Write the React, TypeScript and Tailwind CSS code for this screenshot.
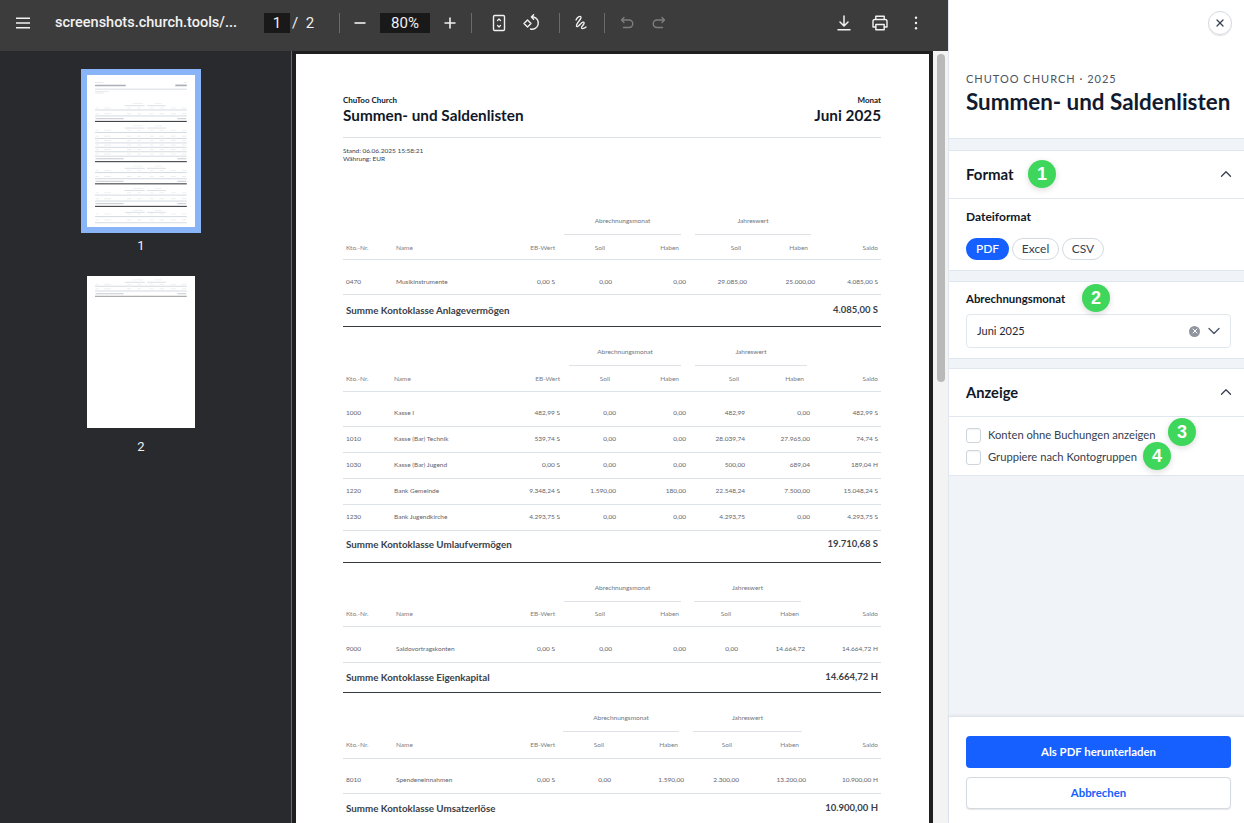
import type { ReactNode } from 'react';
import { ChevronDown, ChevronUp, X } from 'lucide-react';

interface Table {
    cols: string;
    spacing: string;
    headSize: string;
    firstRow: string;
    summarySize: string;
    groupGap: string;
    groupLeft: string;
    groupWidths: string[];
    headPads: string[];
    rows: string[][];
    summary: string;
    amount: string;
}

const tables: Table[] = [
    {
        cols: 'grid-cols-[50px_100px_59px_57px_74px_61px_68px_63px]',
        spacing: 'mt-[51px]',
        headSize: 'h-[25px] pt-[1px]',
        firstRow: 'h-[35px] pt-[10px]',
        summarySize: 'h-[32px] pb-[1px]',
        groupGap: 'gap-[14px]',
        groupLeft: 'ml-[221px]',
        groupWidths: ['w-[117px]', 'w-[116px]'],
        headPads: ['pr-[7px]', 'pr-[7px]', 'pr-[6px]', 'pr-[7px]'],
        rows: [['0470', 'Musikinstrumente', '0,00 S', '0,00', '0,00', '29.085,00', '25.000,00', '4.085,00 S']],
        summary: 'Summe Kontoklasse Anlagevermögen',
        amount: '4.085,00 S'
    },
    {
        cols: 'grid-cols-[48px_100px_66px_56px_70px_59px_65px_68px]',
        spacing: 'mt-[18px]',
        headSize: 'h-[26px]',
        firstRow: 'h-[35px] pt-[8px]',
        summarySize: 'h-[32px] pb-[4px]',
        groupGap: 'gap-[14px]',
        groupLeft: 'ml-[226px]',
        groupWidths: ['w-[112px]', 'w-[112px]'],
        headPads: ['pr-[6px]', 'pr-[7px]', 'pr-[6px]', 'pr-[6px]'],
        rows: [
            ['1000', 'Kasse I', '482,99 S', '0,00', '0,00', '482,99', '0,00', '482,99 S'],
            ['1010', 'Kasse (Bar) Technik', '539,74 S', '0,00', '0,00', '28.039,74', '27.965,00', '74,74 S'],
            ['1030', 'Kasse (Bar) Jugend', '0,00 S', '0,00', '0,00', '500,00', '689,04', '189,04 H'],
            ['1220', 'Bank Gemeinde', '9.348,24 S', '1.590,00', '180,00', '22.548,24', '7.500,00', '15.048,24 S'],
            ['1230', 'Bank Jugendkirche', '4.293,75 S', '0,00', '0,00', '4.293,75', '0,00', '4.293,75 S']
        ],
        summary: 'Summe Kontoklasse Umlaufvermögen',
        amount: '19.710,68 S'
    },
    {
        cols: 'grid-cols-[50px_100px_59px_57px_74px_52px_67px_73px]',
        spacing: 'mt-[18px]',
        headSize: 'h-[25px]',
        firstRow: 'h-[36px] pt-[9px]',
        summarySize: 'h-[30px] pb-[1px]',
        groupGap: 'gap-[13px]',
        groupLeft: 'ml-[221px]',
        groupWidths: ['w-[117px]', 'w-[107px]'],
        headPads: ['pr-[7px]', 'pr-[7px]', 'pr-[7px]', 'pr-[6px]'],
        rows: [['9000', 'Saldovortragskonten', '0,00 S', '0,00', '0,00', '0,00', '14.664,72', '14.664,72 H']],
        summary: 'Summe Kontoklasse Eigenkapital',
        amount: '14.664,72 H'
    },
    {
        cols: 'grid-cols-[50px_100px_59px_56px_73px_55px_67px_72px]',
        spacing: 'mt-[18px]',
        headSize: 'h-[27px]',
        firstRow: 'h-[35px] pt-[8px]',
        summarySize: 'h-[30px] pb-[1px]',
        groupGap: 'gap-[14px]',
        groupLeft: 'ml-[220px]',
        groupWidths: ['w-[116px]', 'w-[109px]'],
        headPads: ['pr-[7px]', 'pr-[6px]', 'pr-[7px]', 'pr-[7px]'],
        rows: [['8010', 'Spendeneinnahmen', '0,00 S', '0,00', '1.590,00', '2.300,00', '13.200,00', '10.900,00 H']],
        summary: 'Summe Kontoklasse Umsatzerlöse',
        amount: '10.900,00 H'
    }
];

// y positions for the little page previews, in page pixels
const miniFirst = [
    { g: 167, r: 180, h: 194, b: 205, rows: [[228, 240]], s: 256, e: 272 },
    { g: 298, r: 311, h: 324, b: 337, rows: [[359, 372], [385, 398], [411, 424], [437, 450], [464, 476]], s: 491, e: 508 },
    { g: 534, r: 547, h: 560, b: 572, rows: [[595, 608]], s: 623, e: 638 },
    { g: 665, r: 677, h: 691, b: 704, rows: [[726, 739]], s: 754, e: 770 },
    { g: 795, r: 805, h: 815, b: 830, rows: [[850, 866]], s: 0, e: 0 }
];

const miniSecond = [
    { g: 23, r: 37, h: 49, b: 60, rows: [[76, 88]], s: 104, e: 119 }
];

const miniCols = [[50, 20], [100, 40], [235, 24], [296, 20], [368, 22], [425, 26], [492, 28], [556, 26]];

const MiniPage = ({ blocks, first, endColor }: { blocks: typeof miniFirst; first?: boolean; endColor: string }) => (
    <svg viewBox="0 0 633 891" className="block w-[108px] h-[152px] bg-white">
        {first && (
            <>
                <rect x="47" y="41" width="50" height="5" fill="#e1e3e7" />
                <rect x="47" y="57" width="180" height="9" fill="#aab0b8" />
                <rect x="565" y="41" width="20" height="5" fill="#e1e3e7" />
                <rect x="518" y="56" width="67" height="10" fill="#aab0b8" />
                <rect x="47" y="80" width="538" height="6" fill="#d9dde3" />
                <rect x="47" y="95" width="80" height="5" fill="#e4e6ea" />
                <rect x="47" y="103" width="50" height="5" fill="#e4e6ea" />
            </>
        )}
        {blocks.map((t) => (
            <g key={t.g}>
                <rect x="268" y={t.g - 3} width="60" height="5" fill="#eceef1" />
                <rect x="398" y={t.g - 3} width="40" height="5" fill="#eceef1" />
                <rect x="221" y={t.r - 3} width="117" height="6" fill="#dde1e6" />
                <rect x="352" y={t.r - 3} width="110" height="6" fill="#dde1e6" />
                {miniCols.map(([x, w]) => (
                    <rect key={x} x={x} y={t.h - 3} width={w} height="5" fill="#eceef1" />
                ))}
                <rect x="47" y={t.b - 3} width="538" height="6" fill="#d5dbe2" />
                {t.rows.map(([text, rule]) => (
                    <g key={text}>
                        {miniCols.map(([x, w]) => (
                            <rect key={x} x={x} y={text - 3} width={w} height="5" fill="#e8eaed" />
                        ))}
                        <rect x="47" y={rule - 3} width="538" height="6" fill="#d5dbe2" />
                    </g>
                ))}
                {t.e > 0 && (
                    <>
                        <rect x="50" y={t.s - 3} width="165" height="6" fill="#c6cad0" />
                        <rect x="530" y={t.s - 3} width="52" height="6" fill="#c6cad0" />
                        <rect x="47" y={t.e - 3} width="538" height="6" fill={endColor} />
                    </>
                )}
            </g>
        ))}
    </svg>
);

const ReportTable = ({ table }: { table: Table }) => {
    const heads = ['EB-Wert', 'Soll', 'Haben', 'Soll', 'Haben', 'Saldo'];
    const headPads = ['', ...table.headPads, ''];

    return (
        <div className={table.spacing}>
            <div className={`flex h-[21px] ${table.groupLeft} ${table.groupGap}`}>
                {['Abrechnungsmonat', 'Jahreswert'].map((label, i) => (
                    <div
                        key={label}
                        className={`${table.groupWidths[i]} border-b border-[#dfe3e8] text-center text-[6.5px] leading-[14px] text-[#70757d]`}
                    >
                        {label}
                    </div>
                ))}
            </div>
            <div className={`grid ${table.cols} ${table.headSize} items-center border-b border-[#dde2e8] px-[3px] text-[6.5px] text-[#7b8087]`}>
                <span>Kto.-Nr.</span>
                <span>Name</span>
                {heads.map((head, i) => (
                    <span key={i} className={`text-right ${headPads[i]}`}>{head}</span>
                ))}
            </div>
            {table.rows.map((row, i) => (
                <div
                    key={row[0]}
                    className={`grid ${table.cols} ${i === 0 ? table.firstRow : 'h-[26px] pb-[1px]'} items-center border-b border-[#dde2e8] px-[3px] text-[6.5px] text-[#5f646c]`}
                >
                    {row.map((value, j) => (
                        <span key={j} className={`whitespace-nowrap ${j > 1 ? 'text-right' : ''}`}>{value}</span>
                    ))}
                </div>
            ))}
            <div className={`flex ${table.summarySize} items-center justify-between border-b border-[#343a40] px-[3px] font-bold text-[#3b4149]`}>
                <span className="text-[9.8px]">{table.summary}</span>
                <span className="text-[9.5px]">{table.amount}</span>
            </div>
        </div>
    );
};

const Icon = ({ children, muted }: { children: ReactNode; muted?: boolean }) => (
    <svg
        viewBox="0 0 20 20"
        fill="none"
        stroke="currentColor"
        strokeWidth="1.4"
        strokeLinecap="round"
        strokeLinejoin="round"
        className={`w-5 h-5 shrink-0 ${muted ? 'text-[#7d7e80]' : 'text-[#f1f1f1]'}`}
    >
        {children}
    </svg>
);

const Separator = ({ className }: { className: string }) => (
    <div className={`w-px h-5 bg-[#6a6a6a] shrink-0 ${className}`} />
);

const Toolbar = () => (
    <div className="h-[51px] shrink-0 bg-[#3c3c3c] flex items-start pt-[13px] pl-[13px] pr-[22px] text-[15px] text-[#f1f1f1] [font-family:Roboto,sans-serif]">
        <Icon><path d="M3 5.3h14M3 10h14M3 14.7h14" strokeLinecap="butt" /></Icon>
        <div className="ml-[22px] w-[182px] text-[14.5px] font-medium leading-5 whitespace-nowrap">screenshots.church.tools/...</div>
        <div className="ml-[27px] w-[26px] h-5 bg-[#191919] text-center leading-5 shrink-0">1</div>
        <span className="w-[10px] text-center leading-5">/</span>
        <span className="w-[20px] text-center leading-5">2</span>
        <Separator className="ml-[19px]" />
        <div className="ml-[10px]"><Icon><path d="M4.5 10h11" strokeWidth="1.6" strokeLinecap="butt" /></Icon></div>
        <div className="ml-[10px] w-[50px] h-5 bg-[#191919] text-center leading-5 shrink-0">80%</div>
        <div className="ml-[10px]"><Icon><path d="M4.5 10h11M10 4.5v11" strokeWidth="1.6" strokeLinecap="butt" /></Icon></div>
        <Separator className="ml-[11px]" />
        <div className="ml-[17px]">
            <Icon>
                <rect x="4.5" y="2.5" width="11" height="15" rx="1.2" />
                <path d="M8.5 7.5 10 6l1.5 1.5M8.5 12.5 10 14l1.5-1.5" strokeWidth="1.2" />
            </Icon>
        </div>
        <div className="ml-[12px]">
            <Icon>
                <path d="M6.5 7 10 10.5 6.5 14 3 10.5z" />
                <path d="M10.5 4h2.2a5.6 5.6 0 1 1-3.2 12M12.6 1.8 10.4 4l2.2 2.2" />
            </Icon>
        </div>
        <Separator className="ml-[18px]" />
        <div className="ml-[12px]">
            <Icon>
                <path d="M4 7c1-3 4-4.500 5-3 1 2-5 6-4.500 9 .4 2 3-1 5-3 1.500-1.500 3-1 2.500.5-.5 2-3 3-2.500 4.500.4 1 3 .5 4.500-1" strokeWidth="1.3" />
            </Icon>
        </div>
        <Separator className="ml-[12px]" />
        <div className="ml-[12px]">
            <Icon muted><path d="M7 4.5 4.500 7 7 9.500M4.800 7H12a3.500 3.500 0 0 1 0 7.500H6.500" /></Icon>
        </div>
        <div className="ml-[12px]">
            <Icon muted><path d="M13 4.500 15.500 7 13 9.500M15.200 7H8a3.500 3.500 0 0 0 0 7.500h5.500" /></Icon>
        </div>
        <div className="ml-auto">
            <Icon><path d="M10 3v9.500M6 9l4 4 4-4M4 16.700h12" strokeWidth="1.5" /></Icon>
        </div>
        <div className="ml-[16px]">
            <Icon>
                <path d="M5.800 6.500V3.300h8.400v3.200M5.800 14H3V8.300a1.800 1.800 0 0 1 1.800-1.800h10.400A1.800 1.800 0 0 1 17 8.300V14h-2.800" />
                <rect x="5.800" y="11.500" width="8.400" height="5.200" />
            </Icon>
        </div>
        <div className="ml-[16px]">
            <Icon>
                <circle cx="10" cy="4.700" r="1.200" fill="currentColor" stroke="none" />
                <circle cx="10" cy="10" r="1.200" fill="currentColor" stroke="none" />
                <circle cx="10" cy="15.300" r="1.200" fill="currentColor" stroke="none" />
            </Icon>
        </div>
    </div>
);

const Thumbnails = () => (
    <div className="w-[291px] shrink-0 bg-[#292a2d] flex flex-col items-center pt-[18px] pr-[9px] text-[13px] text-[#f1f1f1] [font-family:Roboto,sans-serif]">
        <div className="border-[6px] border-[#8ab4f8]">
            <MiniPage blocks={miniFirst} first endColor="#2f3338" />
        </div>
        <div className="mt-[5px] h-[15px] leading-[15px]">1</div>
        <div className="mt-[23px]">
            <MiniPage blocks={miniSecond} endColor="#9a9a9a" />
        </div>
        <div className="mt-[11px] h-[15px] leading-[15px]">2</div>
    </div>
);

const Page = () => (
    <div className="w-[633px] h-[891px] shrink-0 mt-[3px] ml-[4px] bg-white pl-[47px] pr-[48px] pt-[41px] [font-family:Lato,sans-serif]">
        <div className="flex justify-between border-b border-[#dde2e8] pb-[12px] text-[#111827]">
            <div>
                <div className="text-[8px] leading-[10px] font-bold">ChuToo Church</div>
                <div className="text-[15.3px] leading-[20px] font-bold whitespace-nowrap">Summen- und Saldenlisten</div>
            </div>
            <div className="text-right">
                <div className="text-[8px] leading-[10px] font-bold">Monat</div>
                <div className="text-[15.3px] leading-[20px] font-bold">Juni 2025</div>
            </div>
        </div>
        <div className="mt-[9px] text-[6.5px] leading-[8px] text-[#374151]">
            <div>Stand: 06.06.2025 15:58:21</div>
            <div>Währung: EUR</div>
        </div>
        {tables.map((table) => (
            <ReportTable key={table.summary} table={table} />
        ))}
    </div>
);

const Badge = ({ value, className }: { value: number; className: string }) => (
    <div
        className={`absolute w-[28px] h-[28px] rounded-full bg-[#3fd65c] text-white text-[18px] font-bold leading-[28px] text-center shadow-[0_2px_6px_rgba(0,0,0,0.15)] [font-family:'Liberation_Sans',sans-serif] ${className}`}
    >
        {value}
    </div>
);

const Band = ({ className }: { className: string }) => (
    <div className={`shrink-0 bg-[#f0f3f8] border-b border-[#e1e7ef] ${className}`} />
);

const SidePanel = () => (
    <div className="relative w-[296px] shrink-0 h-full flex flex-col bg-white border-l border-[#e1e7ef] [font-family:Lato,sans-serif] text-[#111827]">
        <div className="h-[139px] shrink-0 border-b border-[#e1e7ef] pl-[17px] pr-[12px] pt-[11px]">
            <div className="flex justify-end">
                <button className="w-[24px] h-[24px] rounded-full border border-[#d5dae1] flex items-center justify-center shadow-[0_1px_1px_rgba(0,0,0,0.12)] text-[#374151]">
                    <X className="w-3 h-3" strokeWidth={2.5} />
                </button>
            </div>
            <div className="mt-[37px] text-[11px] leading-[14px] tracking-[0.09em] text-[#4b5563] whitespace-nowrap">CHUTOO CHURCH · 2025</div>
            <div className="mt-[1px] text-[22.4px] leading-[30px] font-bold whitespace-nowrap text-[#111a2e]">Summen- und Saldenlisten</div>
        </div>
        <Band className="h-[12px]" />

        <div className="h-[48px] shrink-0 flex items-center justify-between border-b border-[#e1e7ef] pl-[17px] pr-[9px]">
            <span className="text-[15px] font-bold">Format</span>
            <ChevronUp className="w-[18px] h-[18px] text-[#374151] -mt-[2px]" strokeWidth={1.7} />
        </div>
        <div className="h-[71px] shrink-0 pl-[17px] pt-[10px]">
            <div className="text-[12px] leading-[15px] font-bold">Dateiformat</div>
            <div className="mt-[14px] flex gap-[3px] text-[12px]">
                <span className="w-[43px] h-[22px] leading-[22px] text-center rounded-full bg-[#1660ff] text-white font-medium">PDF</span>
                <span className="w-[47px] h-[22px] leading-[20px] text-center rounded-full border border-[#d5dae1] text-[#374151]">Excel</span>
                <span className="w-[42px] h-[22px] leading-[20px] text-center rounded-full border border-[#d5dae1] text-[#374151]">CSV</span>
            </div>
        </div>
        <Band className="h-[12px] border-t border-t-[#e1e7ef]" />

        <div className="h-[76px] shrink-0 pl-[17px] pr-[13px] pt-[9px]">
            <div className="text-[11.4px] leading-[15px] font-bold">Abrechnungsmonat</div>
            <div className="mt-[8px] h-[34px] rounded-[4px] border border-[#e1e7ef] flex items-center pl-[10px] pr-[6px] text-[11px] text-[#1f2937]">
                <span className="flex-1">Juni 2025</span>
                <span className="w-[11px] h-[11px] rounded-full bg-[#8f959e] flex items-center justify-center text-white">
                    <X className="w-[8px] h-[8px]" strokeWidth={3} />
                </span>
                <ChevronDown className="ml-[4px] w-5 h-5 text-[#4b5563]" strokeWidth={1.6} />
            </div>
        </div>
        <Band className="h-[11px] border-t border-t-[#e1e7ef]" />

        <div className="h-[48px] shrink-0 flex items-center justify-between border-b border-[#e1e7ef] pl-[17px] pr-[9px]">
            <span className="text-[14.7px] font-bold">Anzeige</span>
            <ChevronUp className="w-[18px] h-[18px] text-[#374151] -mt-[2px]" strokeWidth={1.7} />
        </div>
        <div className="h-[59px] shrink-0 border-b border-[#e1e7ef] pl-[17px] pt-[11px] text-[11.2px] text-[#374151]">
            {['Konten ohne Buchungen anzeigen', 'Gruppiere nach Kontogruppen'].map((label) => (
                <label key={label} className="flex items-center h-[15px] mb-[7px] gap-[7px] whitespace-nowrap">
                    <span className="w-[15px] h-[15px] rounded-[3px] border border-[#cfd5dd] shadow-[inset_0_1px_1px_rgba(0,0,0,0.05)]" />
                    {label}
                </label>
            ))}
        </div>

        <div className="flex-1 bg-[#f0f3f8]" />

        <div className="h-[107px] shrink-0 bg-white border-t border-[#dfe4ea] shadow-[0_-1px_3px_rgba(0,0,0,0.06)] pl-[17px] pr-[13px] pt-[19px] text-[11.4px] font-bold">
            <button className="block w-full h-[32px] rounded-[4px] bg-[#1660ff] text-white">Als PDF herunterladen</button>
            <button className="block mt-[9px] w-full h-[32px] rounded-[4px] bg-white border border-[#d5dae1] shadow-[0_1px_1px_rgba(0,0,0,0.1)] text-[#1660ff]">Abbrechen</button>
        </div>

        <Badge value={1} className="left-[79px] top-[160px]" />
        <Badge value={2} className="left-[133px] top-[284px]" />
        <Badge value={3} className="left-[219px] top-[418px]" />
        <Badge value={4} className="left-[194px] top-[442px]" />
    </div>
);

export default function App() {
    return (
        <div className="w-[1244px] h-[823px] flex overflow-hidden bg-white">
            <div className="w-[948px] shrink-0 flex flex-col">
                <Toolbar />
                <div className="flex-1 min-h-0 flex">
                    <Thumbnails />
                    <div className="flex-1 min-w-0 flex overflow-hidden bg-[#1f1f1f] border-l border-[#66686b]">
                        <Page />
                        <div className="ml-auto w-[15px] shrink-0 bg-[#f3f3f3] pt-[3px] pl-[4px]">
                            <div className="w-[8px] h-[328px] rounded-full bg-[#b9b9b9]" />
                        </div>
                    </div>
                </div>
            </div>
            <SidePanel />
        </div>
    );
}
